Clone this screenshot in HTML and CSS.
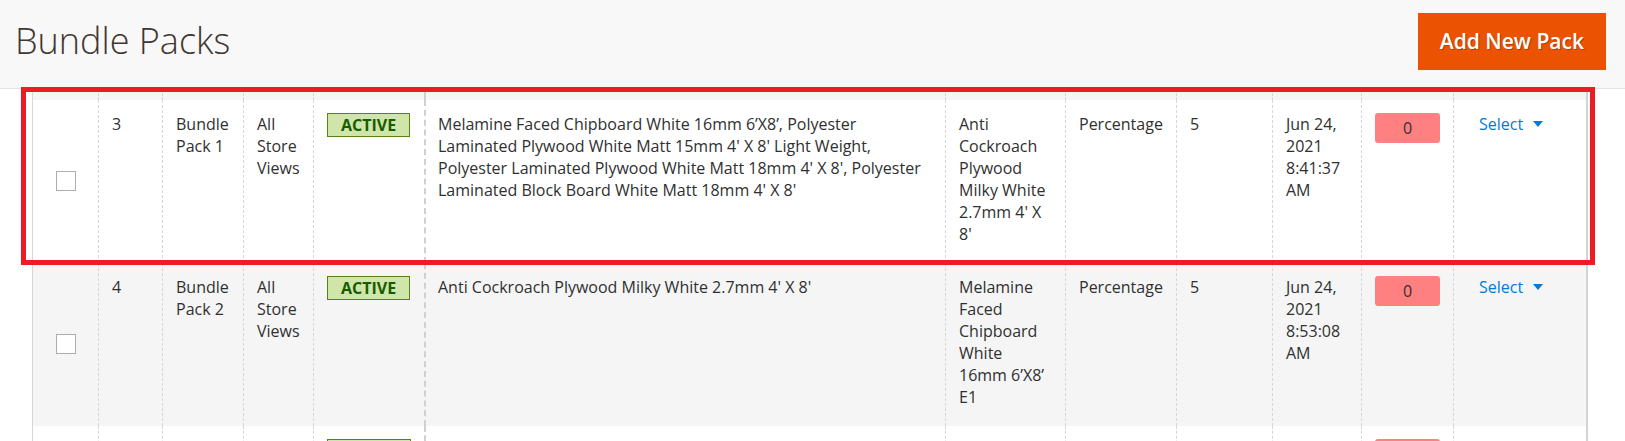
FILE: index.html
```html
<!DOCTYPE html>
<html lang="en">
<head>
<meta charset="utf-8">
<title>Bundle Packs</title>
<link rel="stylesheet" href="styles.css">
</head>
<body>
<header class="page-header">
  <h1 class="page-title">Bundle Packs</h1>
  <button class="btn-primary" type="button">Add New Pack</button>
</header>
<main class="content">
  <div class="grid">
    <div class="row row-alt row-stub">
      <div class="cell"></div><div class="cell"></div><div class="cell"></div><div class="cell"></div>
      <div class="cell"></div><div class="cell cell-products"></div><div class="cell"></div><div class="cell"></div>
      <div class="cell"></div><div class="cell"></div><div class="cell"></div><div class="cell"></div>
    </div>
    <div class="row">
      <div class="cell cell-check"><span class="checkbox"></span></div>
      <div class="cell">3</div>
      <div class="cell">Bundle Pack 1</div>
      <div class="cell">All Store Views</div>
      <div class="cell"><span class="badge-active">ACTIVE</span></div>
      <div class="cell cell-products">Melamine Faced Chipboard White 16mm 6’X8’, Polyester Laminated Plywood White Matt 15mm 4' X 8' Light Weight, Polyester Laminated Plywood White Matt 18mm 4' X 8', Polyester Laminated Block Board White Matt 18mm 4' X 8'</div>
      <div class="cell">Anti Cockroach Plywood Milky White 2.7mm 4' X 8'</div>
      <div class="cell">Percentage</div>
      <div class="cell">5</div>
      <div class="cell">Jun 24, 2021 8:41:37 AM</div>
      <div class="cell"><span class="badge-qty">0</span></div>
      <div class="cell"><a class="action-select" href="#">Select<span class="caret"></span></a></div>
    </div>
    <div class="row row-alt">
      <div class="cell cell-check"><span class="checkbox"></span></div>
      <div class="cell">4</div>
      <div class="cell">Bundle Pack 2</div>
      <div class="cell">All Store Views</div>
      <div class="cell"><span class="badge-active">ACTIVE</span></div>
      <div class="cell cell-products">Anti Cockroach Plywood Milky White 2.7mm 4' X 8'</div>
      <div class="cell">Melamine Faced Chipboard White 16mm 6’X8’ E1</div>
      <div class="cell">Percentage</div>
      <div class="cell">5</div>
      <div class="cell">Jun 24, 2021 8:53:08 AM</div>
      <div class="cell"><span class="badge-qty">0</span></div>
      <div class="cell"><a class="action-select" href="#">Select<span class="caret"></span></a></div>
    </div>
    <div class="row row-partial">
      <div class="cell cell-check"></div>
      <div class="cell"></div>
      <div class="cell"></div>
      <div class="cell"></div>
      <div class="cell"><span class="badge-active badge-empty"></span></div>
      <div class="cell cell-products"></div>
      <div class="cell"></div>
      <div class="cell"></div>
      <div class="cell"></div>
      <div class="cell"></div>
      <div class="cell"><span class="badge-qty"></span></div>
      <div class="cell"></div>
    </div>
  </div>
</main>
<div class="highlight"></div>
</body>
</html>
```

FILE: styles.css
```css
* { box-sizing: border-box; }
html, body { margin: 0; padding: 0; background: #ffffff; }
body {
  font-family: "Open Sans", "Liberation Sans", sans-serif;
  font-size: 16px;
  line-height: 22px;
  color: #303030;
  position: relative;
}
.page-header {
  height: 89px;
  background: #f8f8f8;
  border-bottom: 1px solid #e3e3e3;
  display: flex;
  justify-content: space-between;
  align-items: flex-start;
  padding: 13px 19px 0 15px;
}
.page-title {
  margin: 3px 0 0 0;
  font-size: 36px;
  line-height: 49px;
  font-weight: 300;
  color: #41362f;
}
.btn-primary {
  height: 57px;
  padding: 0 22px;
  background: #eb5202;
  border: 0;
  color: #ffffff;
  font-family: "Open Sans", "Liberation Sans", sans-serif;
  font-size: 21px;
  font-weight: 600;
  line-height: 57px;
  text-shadow: 1px 1px 0 rgba(0,0,0,0.25);
}
.content { padding-left: 32px; width: 1588px; }
.grid {
  border-left: 1px solid #d6d6d6;
  border-right: 2px solid #d3d3d3;
}
.row {
  display: grid;
  grid-template-columns: 65px 64px 81px 70px 111px 521px 120px 111px 96px 89px 92px 133px;
  background: #ffffff;
}
.row-alt { background: #f5f5f5; }
.row-stub { height: 11px; }
.cell {
  padding: 13px 13px 18px 13px;
  border-left: 1px dashed #d6d6d6;
  min-height: 163px;
}
.row-stub .cell { padding: 0; min-height: 0; }
.row-partial .cell { min-height: 60px; }
.cell:first-child { border-left: 0; }
.cell-products { border-left: 2px dashed #d0d0d0; padding-left: 12px; }
.cell-check {
  display: flex;
  align-items: center;
  justify-content: center;
  padding: 0;
}
.checkbox {
  display: block;
  width: 20px;
  height: 20px;
  background: #ffffff;
  border: 1px solid #adadad;
  margin-top: -1px;
}
.badge-active {
  display: inline-block;
  vertical-align: top;
  margin-top: 0;
  padding: 0 13px;
  line-height: 22px;
  background: #d0e5a9;
  border: 1px solid #5b8116;
  color: #185b00;
  font-weight: 700;
}
.badge-empty { width: 84px; height: 24px; }
.badge-qty {
  display: inline-block;
  vertical-align: top;
  margin-top: 0;
  width: 65px;
  height: 30px;
  line-height: 30px;
  text-align: center;
  background: #ff8080;
  border-radius: 3px;
  color: #303030;
}
.action-select {
  display: inline-block;
  margin-left: 12px;
  color: #007bdb;
  text-decoration: none;
}
.caret {
  display: inline-block;
  width: 0;
  height: 0;
  margin-left: 10px;
  vertical-align: 3px;
  border-left: 5px solid transparent;
  border-right: 5px solid transparent;
  border-top: 6px solid #007bdb;
}
.highlight {
  position: absolute;
  left: 21px;
  top: 87px;
  width: 1574px;
  height: 178px;
  border: 5px solid #ed1c24;
  pointer-events: none;
}
```
